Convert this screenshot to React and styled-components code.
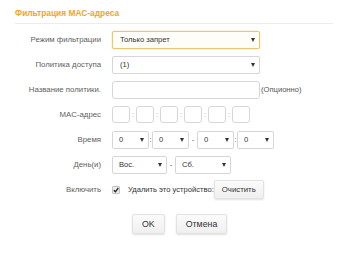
import React from "react";
import styled, { createGlobalStyle } from "styled-components";

const GlobalStyle = createGlobalStyle`
  body {
    margin: 0;
    background: #fff;
    font-family: "Liberation Sans", Arial, sans-serif;
  }
`;

const Page = styled.div`
  width: 347px;
  height: 255px;
  overflow: hidden;
  background: #fff;
`;

const Header = styled.div`
  margin: 0 14px 0 15px;
  padding: 7px 0 4px;
  border-bottom: 1px solid #ececec;
`;

const Title = styled.h1`
  margin: 0;
  font-size: 8.4px;
  line-height: 12px;
  font-weight: bold;
  color: #f2a51f;
`;

const Form = styled.div`
  margin-top: 3px;
  display: grid;
  grid-template-columns: 101px auto;
  column-gap: 11px;
  grid-auto-rows: 25px;
`;

const Label = styled.div`
  display: flex;
  align-items: center;
  justify-content: flex-end;
  font-size: 7.8px;
  color: #606060;
  white-space: nowrap;
`;

const Field = styled.div`
  display: flex;
  align-items: center;
  font-size: 7.6px;
  color: #333;
  white-space: nowrap;
`;

const SelectBox = styled.div`
  box-sizing: border-box;
  width: ${(p) => p.$w}px;
  height: 18px;
  display: flex;
  align-items: center;
  justify-content: space-between;
  padding: 0 4px 0 ${(p) => (p.$w > 60 ? 7 : 6)}px;
  border: 1px solid ${(p) => (p.$focus ? "#ebc66a" : "#d6d6d6")};
  border-radius: 2px;
  background: ${(p) => (p.$focus ? "#fffdf7" : "#fff")};
  box-shadow: ${(p) => (p.$focus ? "0 0 2px rgba(235, 190, 90, 0.6)" : "none")};
  font-size: 7.6px;
  color: #333;
`;

const Arrow = styled.span`
  width: 0;
  height: 0;
  border-left: 2px solid transparent;
  border-right: 2px solid transparent;
  border-top: 4px solid #333;
`;

const TextInput = styled.div`
  box-sizing: border-box;
  width: ${(p) => p.$w}px;
  height: ${(p) => p.$h}px;
  border: 1px solid #d6d6d6;
  border-radius: 3px;
  background: #fff;
`;

const Sep = styled.span`
  width: ${(p) => p.$w}px;
  text-align: center;
  font-size: 7.6px;
  color: ${(p) => p.$c || "#555"};
`;

const Hint = styled.span`
  margin-left: 1px;
  font-size: 7.6px;
  color: #555;
`;

const Check = styled.span`
  box-sizing: border-box;
  width: 8px;
  height: 8px;
  margin-right: 8px;
  border: 1px solid #c4c4c4;
  border-radius: 1px;
  background: #ececec;
  display: flex;
  align-items: center;
  justify-content: center;
`;

const Button = styled.button`
  box-sizing: border-box;
  height: ${(p) => p.$h}px;
  padding: 0 ${(p) => p.$px}px;
  border: 1px solid #e2e2e2;
  border-radius: 2px;
  background: linear-gradient(#fbfbfb, #efefef);
  box-shadow: 0 1px 2px rgba(0, 0, 0, 0.12);
  font-family: "Liberation Sans", Arial, sans-serif;
  font-size: ${(p) => p.$fs}px;
  color: #333;
  cursor: pointer;
`;

const Actions = styled.div`
  display: flex;
  gap: 11px;
  padding: 12px 0 0 132px;
`;

const Select = ({ w, value, focus }) => (
  <SelectBox $w={w} $focus={focus}>
    <span>{value}</span>
    <Arrow />
  </SelectBox>
);

const macs = [0, 1, 2, 3, 4, 5];

const App = () => (
  <Page>
    <GlobalStyle />
    <Header>
      <Title>Фильтрация МАС-адреса</Title>
    </Header>
    <Form>
      <Label>Режим фильтрации</Label>
      <Field>
        <Select w={148} value="Только запрет" focus />
      </Field>

      <Label>Политика доступа</Label>
      <Field>
        <Select w={148} value="(1)" />
      </Field>

      <Label>Название политики.</Label>
      <Field>
        <TextInput $w={148} $h={18} />
        <Hint>(Опционно)</Hint>
      </Field>

      <Label>MAC-адрес</Label>
      <Field>
        {macs.map((i) => (
          <React.Fragment key={i}>
            {i > 0 && <Sep $w={6} $c="#aaa">:</Sep>}
            <TextInput $w={18} $h={17} />
          </React.Fragment>
        ))}
      </Field>

      <Label>Время</Label>
      <Field>
        <Select w={37} value="0" />
        <Sep $w={3}>:</Sep>
        <Select w={37} value="0" />
        <Sep $w={8}>-</Sep>
        <Select w={37} value="0" />
        <Sep $w={3}>:</Sep>
        <Select w={37} value="0" />
      </Field>

      <Label>День(и)</Label>
      <Field>
        <Select w={55} value="Вос." />
        <Sep $w={8}>-</Sep>
        <Select w={56} value="Сб." />
      </Field>

      <Label>Включить</Label>
      <Field>
        <Check>
          <svg width="6" height="6" viewBox="0 0 6 6">
            <path d="M0.8 3.2 L2.4 4.8 L5.3 1" fill="none" stroke="#222" strokeWidth="1.3" />
          </svg>
        </Check>
        <span>Удалить это устройство:</span>
        <Button $h={19} $px={7} $fs={7.8}>Очистить</Button>
      </Field>
    </Form>
    <Actions>
      <Button $h={20} $px={9} $fs={8.8}>OK</Button>
      <Button $h={20} $px={9} $fs={8.8}>Отмена</Button>
    </Actions>
  </Page>
);

export default App;
